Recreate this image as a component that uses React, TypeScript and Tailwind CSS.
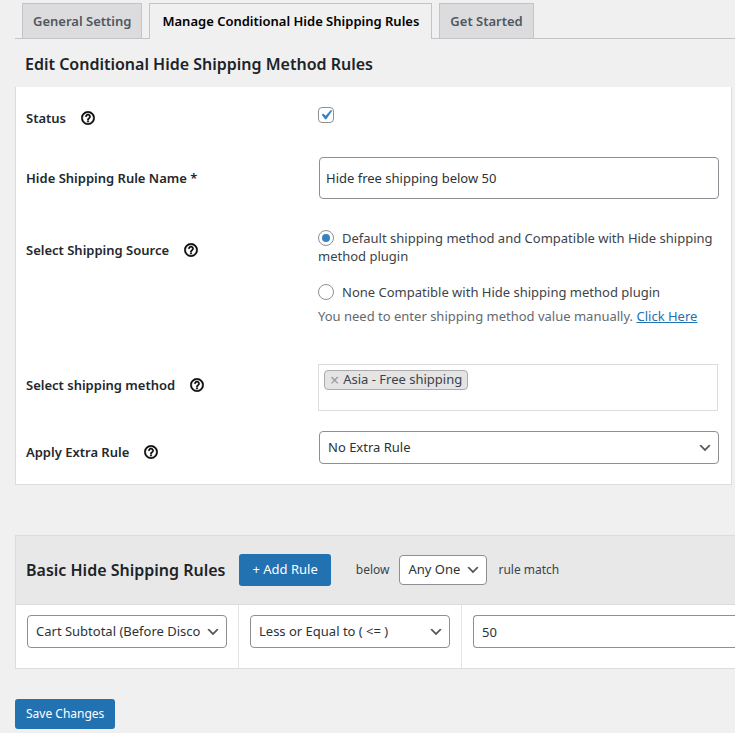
import type { ReactNode } from 'react';

const TABS = ['General Setting', 'Manage Conditional Hide Shipping Rules', 'Get Started'];
const ACTIVE_TAB = 1;

function HelpIcon() {
  return (
    <button type="button" aria-label="Help" className="flex size-[14px] shrink-0 items-center justify-center text-black">
      <svg viewBox="1.5 1.5 21 21" className="size-[14px]" fill="currentColor" stroke="currentColor" strokeWidth="0.7">
        <path d="M11 18h2v-2h-2v2zm1-16C6.48 2 2 6.48 2 12s4.48 10 10 10 10-4.48 10-10S17.52 2 12 2zm0 18c-4.41 0-8-3.59-8-8s3.59-8 8-8 8 3.59 8 8-3.59 8-8 8zm0-14c-2.21 0-4 1.79-4 4h2c0-1.1.9-2 2-2s2 .9 2 2c0 2-3 1.75-3 5h2c0-2.25 3-2.5 3-5 0-2.21-1.79-4-4-4z" />
      </svg>
    </button>
  );
}

type SelectProps = { id?: string; label?: string; option: string; className: string };

function Select({ id, label, option, className }: SelectProps) {
  return (
    <div className={`grid items-center ${className}`}>
      <select
        id={id}
        aria-label={label}
        className="col-start-1 row-start-1 h-full w-full appearance-none rounded border border-[#8c8f94] bg-white pr-[26px] pl-2 text-[13px] text-[#2c3338]"
      >
        <option>{option}</option>
      </select>
      <svg viewBox="0 0 20 20" className="pointer-events-none col-start-1 row-start-1 mr-1.5 size-4 justify-self-end" fill="#555">
        <path d="M5 6l5 5 5-5 2 1-7 7-7-7 2-1z" />
      </svg>
    </div>
  );
}

type RowProps = { label: string; htmlFor?: string; help?: boolean; className?: string; children: ReactNode };

function Row({ label, htmlFor, help, className = 'py-2.5', children }: RowProps) {
  return (
    <div className={`flex ${className}`}>
      <div className="flex h-10 w-[292px] shrink-0 items-center gap-[15px] pt-0.5">
        <label htmlFor={htmlFor} className="text-[13px] leading-5 font-semibold text-[#23282d]">
          {label}
        </label>
        {help && <HelpIcon />}
      </div>
      <div className="min-w-0 flex-1">{children}</div>
    </div>
  );
}

function Radio({ id, checked, children }: { id: string; checked?: boolean; children: ReactNode }) {
  return (
    <label htmlFor={id} className="block text-[13px] leading-[18px] text-[#3c434a]">
      <input
        id={id}
        type="radio"
        name="source"
        defaultChecked={checked}
        className="-mt-1 mr-2 inline-grid size-4 appearance-none place-content-center rounded-full border border-[#8c8f94] bg-white align-middle before:size-2 before:rounded-full checked:before:bg-[#3582c4]"
      />
      {children}
    </label>
  );
}

export default function App() {
  return (
    <div className="min-h-screen overflow-x-hidden bg-[#f0f0f0] pt-[3px] pb-1 pl-[15px] font-['Noto_Sans','Open_Sans',sans-serif] text-[#3c434a]">
      <nav className="flex items-stretch">
        <span className="w-[7px] border-b border-[#c3c4c7]" />
        {TABS.map((tab, i) => (
          <div key={tab} className="flex">
            <a
              href="#"
              className={
                i === ACTIVE_TAB
                  ? 'block border border-b-0 border-[#c3c4c7] bg-[#f0f0f0] px-[12px] pb-px text-[13px] leading-[34px] font-semibold whitespace-nowrap text-black'
                  : 'block border border-[#c3c4c7] bg-[#dcdcde] px-[10px] text-[13px] leading-[34px] font-semibold whitespace-nowrap text-[#50575e]'
              }
            >
              {tab}
            </a>
            <span className="w-[7px] border-b border-[#c3c4c7]" />
          </div>
        ))}
        <span className="flex-1 border-b border-[#c3c4c7]" />
      </nav>

      <h1 className="pt-[13px] pb-[11px] pl-2.5 text-[16px] leading-6 font-semibold text-[#1d2327]">
        Edit Conditional Hide Shipping Method Rules
      </h1>

      <section className="mr-[3px] border border-t-0 border-[#dcdcde] bg-white pr-3 pb-[3px] pl-2.5">
        <Row label="Status" htmlFor="status" help>
          <div className="mt-2.5 grid size-4 place-items-center">
            <input
              id="status"
              type="checkbox"
              defaultChecked
              className="peer col-start-1 row-start-1 size-4 appearance-none rounded border border-[#8c8f94] bg-white"
            />
            <svg
              viewBox="0 0 20 20"
              className="pointer-events-none invisible col-start-1 row-start-1 -m-0.5 size-5 peer-checked:visible"
              fill="#3582c4"
            >
              <path d="M14.83 4.89l1.34.94-5.81 8.38H9.02L5.78 9.67l1.34-1.25 2.57 2.4z" />
            </svg>
          </div>
        </Row>
        <Row label="Hide Shipping Rule Name *" htmlFor="name">
          <div className="pl-px">
            <input
              id="name"
              type="text"
              defaultValue="Hide free shipping below 50"
              className="block h-[42px] w-full rounded border border-[#8c8f94] bg-white px-1.5 text-[13px] text-[#2c3338]"
            />
          </div>
        </Row>
        <Row label="Select Shipping Source" help className="py-5">
          <div className="flex flex-col gap-[18px]">
            <Radio id="default" checked>
              Default shipping method and Compatible with Hide shipping method plugin
            </Radio>
            <Radio id="none">None Compatible with Hide shipping method plugin</Radio>
          </div>
          <p className="mt-1.5 mb-[9px] text-[13px] leading-[18px] text-[#646970]">
            You need to enter shipping method value manually.{' '}
            <a href="#" className="text-[#2271b1] underline">
              Click Here
            </a>
          </p>
        </Row>
        <Row label="Select shipping method" help>
          <div className="mr-px flex h-[47px] items-start border border-[#dcdcde] bg-white p-[5px]">
            <span className="flex h-5 items-center gap-1 rounded border border-[#aaa] bg-[#e4e4e4] px-[5px] text-[13px] text-[#3c434a]">
              <button type="button" aria-label="Remove Asia - Free shipping" className="text-[16px] leading-4 text-[#999]">
                ×
              </button>
              Asia - Free shipping
            </span>
          </div>
        </Row>
        <Row label="Apply Extra Rule" htmlFor="extra" help>
          <Select id="extra" option="No Extra Rule" className="ml-px h-[33px]" />
        </Row>
      </section>

      <section className="mt-[50px] border border-r-0 border-[#dcdcde]">
        <header className="flex h-[69px] items-center border-b border-[#dcdcde] bg-[#e8e8e8] pl-2.5">
          <h2 className="text-[16px] leading-6 font-semibold text-[#1d2327]">Basic Hide Shipping Rules</h2>
          <button type="button" className="ml-[14px] h-8 rounded-[3px] bg-[#2271b1] px-[13px] text-[13px] whitespace-nowrap text-white">
            + Add Rule
          </button>
          <label htmlFor="match" className="ml-[25px] text-[12px]">
            below
          </label>
          <Select id="match" option="Any One" className="ml-[10px] h-[30px] w-[88px]" />
          <span className="ml-[11px] text-[12px]">rule match</span>
        </header>
        <div className="flex h-[63px] bg-white">
          <div className="shrink-0 border-r border-[#e5e5e5] px-[11px] pt-2.5">
            <Select label="Condition" option="Cart Subtotal (Before Discount)" className="h-[33px] w-[200px]" />
          </div>
          <div className="shrink-0 border-r border-[#e5e5e5] px-[11px] pt-2.5">
            <Select label="Operator" option="Less or Equal to ( <= )" className="h-[33px] w-[200px]" />
          </div>
          <div className="min-w-0 flex-1 pt-2.5 pl-[11px]">
            <input
              aria-label="Value"
              type="text"
              defaultValue="50"
              className="block h-[33px] w-full rounded-l border border-r-0 border-[#8c8f94] bg-white px-2 text-[13px] text-[#2c3338]"
            />
          </div>
        </div>
      </section>

      <button type="button" className="mt-[30px] block h-[30px] rounded-[3px] bg-[#2271b1] px-[11px] text-[12px] text-white">
        Save Changes
      </button>
    </div>
  );
}
